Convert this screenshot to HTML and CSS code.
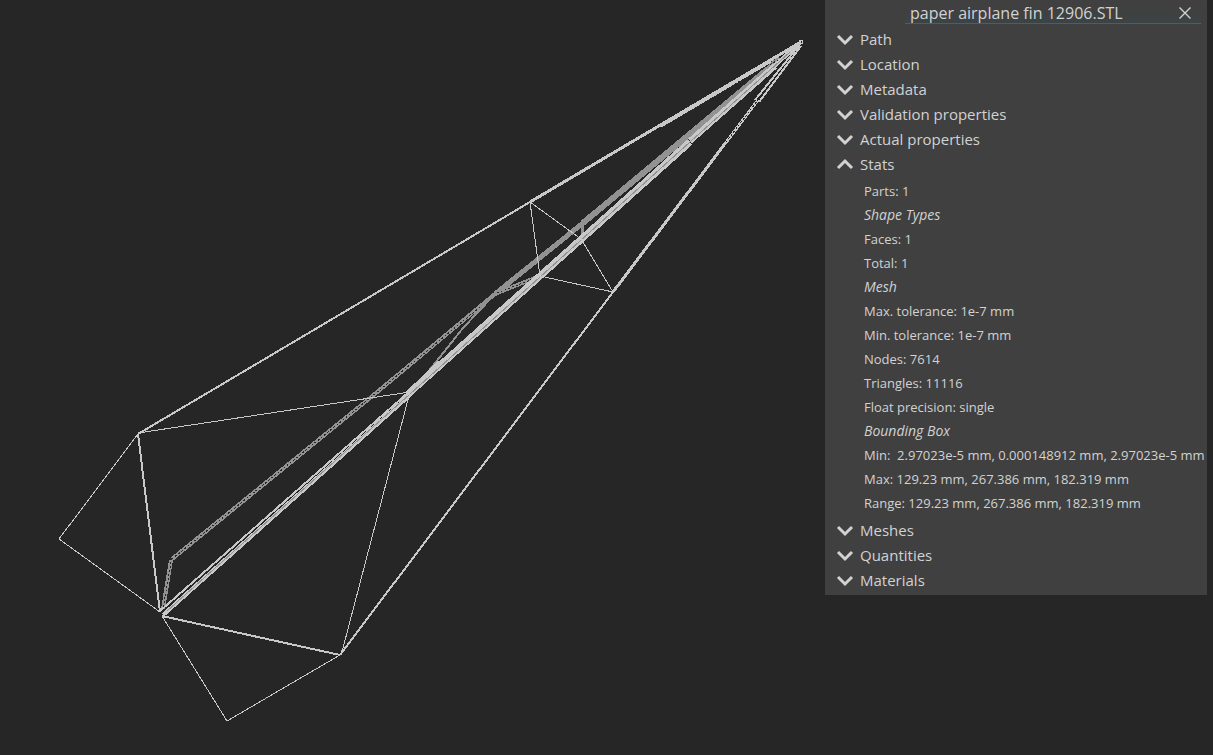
FILE: index.html
```html
<!DOCTYPE html>
<html lang="en">
<head>
    <meta charset="UTF-8">
    <meta name="viewport" content="width=device-width, initial-scale=1.0">
    <title>paper airplane fin 12906.STL</title>
    <link rel="stylesheet" href="styles.css">
</head>
<body>
    <main class="viewer">
        <svg class="model" viewBox="0 0 825 755" preserveAspectRatio="xMinYMin meet" role="img" aria-label="Wireframe model">
            <!-- inner fold, back side -->
            <g class="back">
                <path class="w4" d="M172 559L370 398L495 294"/>
                <path class="w5" d="M495 294L583 223"/>
                <path class="w6" d="M583 223L780 59"/>
                <path class="w4" d="M171 560L163 609"/>
                <path class="w2" d="M495 294L463 328L428 372"/>
                <path class="w4" d="M497 293L540 276"/>
                <path class="w3" d="M583 223L582 238"/>
            </g>
            <g class="gap">
                <path d="M172 559L370 398L480 307"/>
                <path d="M171 562L163 609"/>
                <path d="M497 293L538 277"/>
            </g>
            <!-- keel -->
            <g class="edge">
                <path class="w2" d="M160 611L410 391"/>
                <path class="w4" d="M163 615L410 395"/>
                <path class="w7" d="M408 394L540 276L690 142"/>
                <path class="w6" d="M690 141L775 66"/>
                <path class="w4" d="M772 68L800 43"/>
                <path class="w6" d="M408 394L440 363"/>
            </g>
            <g class="back">
                <path class="w1" d="M167 611L410 394L540 277L690 142L790 52"/>
            </g>
            <!-- wings -->
            <g class="edge">
                <path class="w2" d="M138 434L530 202"/>
                <path class="w3" d="M530 202L801 42"/>
                <path class="w4" d="M660 126L770 61"/>
                <path class="w2" d="M340 655L613 292"/>
                <path class="w3" d="M613 292L758 100"/>
                <path class="w2" d="M755 100L801 43M759 102L801 46"/>
                <path class="w2" d="M138 434L160 612M162 616L340 655"/>
                <path class="w1" d="M138 434L59 539L160 612M162 616L227 721L340 655"/>
                <path class="w1" d="M138 433L410 392L343 648L340 655"/>
                <path class="w1" d="M530 202L540 276L613 292L581 239L530 202"/>
                <circle class="w1" cx="801" cy="42" r="2"/>
            </g>
            <g class="gap">
                <path d="M735 84L778 60M726 142L758 100"/>
            </g>
        </svg>

        <aside class="panel">
            <div class="title">
                <input type="text" value="paper airplane fin 12906.STL" aria-label="Name">
                <button class="close" type="button" aria-label="Close">
                    <svg viewBox="0 0 12 12"><path d="M0.5 0.5L11.5 11.5M11.5 0.5L0.5 11.5"/></svg>
                </button>
            </div>
            <button class="group" type="button" aria-expanded="false"><svg viewBox="0 0 16 10"><path d="M1 2L8 9L15 2"/></svg>Path</button>
            <button class="group" type="button" aria-expanded="false"><svg viewBox="0 0 16 10"><path d="M1 2L8 9L15 2"/></svg>Location</button>
            <button class="group" type="button" aria-expanded="false"><svg viewBox="0 0 16 10"><path d="M1 2L8 9L15 2"/></svg>Metadata</button>
            <button class="group" type="button" aria-expanded="false"><svg viewBox="0 0 16 10"><path d="M1 2L8 9L15 2"/></svg>Validation properties</button>
            <button class="group" type="button" aria-expanded="false"><svg viewBox="0 0 16 10"><path d="M1 2L8 9L15 2"/></svg>Actual properties</button>
            <button class="group" type="button" aria-expanded="true"><svg viewBox="0 0 16 10"><path d="M1 9L8 2L15 9"/></svg>Stats</button>
            <div class="stats">
                <p>Parts: 1</p>
                <h3>Shape Types</h3>
                <p>Faces: 1</p>
                <p>Total: 1</p>
                <h3>Mesh</h3>
                <p>Max. tolerance: 1e-7 mm</p>
                <p>Min. tolerance: 1e-7 mm</p>
                <p>Nodes: 7614</p>
                <p>Triangles: 11116</p>
                <p>Float precision: single</p>
                <h3>Bounding Box</h3>
                <p>Min: &nbsp;2.97023e-5 mm, 0.000148912 mm, 2.97023e-5 mm</p>
                <p>Max: 129.23 mm, 267.386 mm, 182.319 mm</p>
                <p>Range: 129.23 mm, 267.386 mm, 182.319 mm</p>
            </div>
            <button class="group" type="button" aria-expanded="false"><svg viewBox="0 0 16 10"><path d="M1 2L8 9L15 2"/></svg>Meshes</button>
            <button class="group" type="button" aria-expanded="false"><svg viewBox="0 0 16 10"><path d="M1 2L8 9L15 2"/></svg>Quantities</button>
            <button class="group" type="button" aria-expanded="false"><svg viewBox="0 0 16 10"><path d="M1 2L8 9L15 2"/></svg>Materials</button>
        </aside>
    </main>
</body>
</html>
```
FILE: styles.css
```css
body {
    margin: 0;
    background-color: #262626;
    color: #d2d2d2;
    font-family: "Open Sans", sans-serif;
}
.viewer {
    display: flex;
    align-items: flex-start;
    min-height: 100vh;
    padding-right: 6px;
    box-sizing: border-box;
}

/* 3D view */
.model {
    flex: 1;
    min-width: 0;
    height: 100vh;
    fill: none;
    shape-rendering: crispEdges;
}
.edge {
    stroke: #c8c8c8;
}
.back {
    stroke: #929292;
}
.gap {
    stroke: #262626;
    stroke-dasharray: 2 2;
}
.w1 { stroke-width: 1; }
.w2 { stroke-width: 2; }
.w3 { stroke-width: 3; }
.w4 { stroke-width: 4; }
.w5 { stroke-width: 5; }
.w6 { stroke-width: 6; }
.w7 { stroke-width: 7; }

/* properties panel */
.panel {
    width: 382px;
    padding-bottom: 3px;
    box-sizing: border-box;
    background-color: #404040;
}
.title {
    display: flex;
    height: 24px;
    margin: 0 6px 2px 80px;
    box-sizing: border-box;
    border-bottom: 1px solid #3d6370;
    background: linear-gradient(#404040 50%, #3a4446);
}
.title input {
    flex: 1;
    min-width: 0;
    padding: 2px 0 0 5px;
    border: 0;
    outline: 0;
    background: none;
    color: inherit;
    font: 16px "Open Sans", sans-serif;
}
.close {
    display: flex;
    align-items: center;
    justify-content: center;
    width: 32px;
    padding: 2px 0 0;
    border: 0;
    background: none;
}
.close svg {
    width: 12px;
    height: 12px;
    fill: none;
    stroke: #d2d2d2;
    stroke-width: 1.4;
}
.group {
    display: flex;
    align-items: center;
    gap: 7px;
    width: 100%;
    height: 25px;
    padding: 0 12px;
    border: 0;
    background: none;
    color: inherit;
    font: 15px "Open Sans", sans-serif;
    text-align: left;
}
.group svg {
    width: 16px;
    height: 10px;
    fill: none;
    stroke: #d2d2d2;
    stroke-width: 3;
    overflow: visible;
}
.stats {
    padding: 3px 0 2px 39px;
    font-size: 13px;
    line-height: 24px;
    white-space: nowrap;
}
.stats p,
.stats h3 {
    margin: 0;
}
.stats h3 {
    font-size: 14px;
    font-weight: normal;
    font-style: italic;
}
```
